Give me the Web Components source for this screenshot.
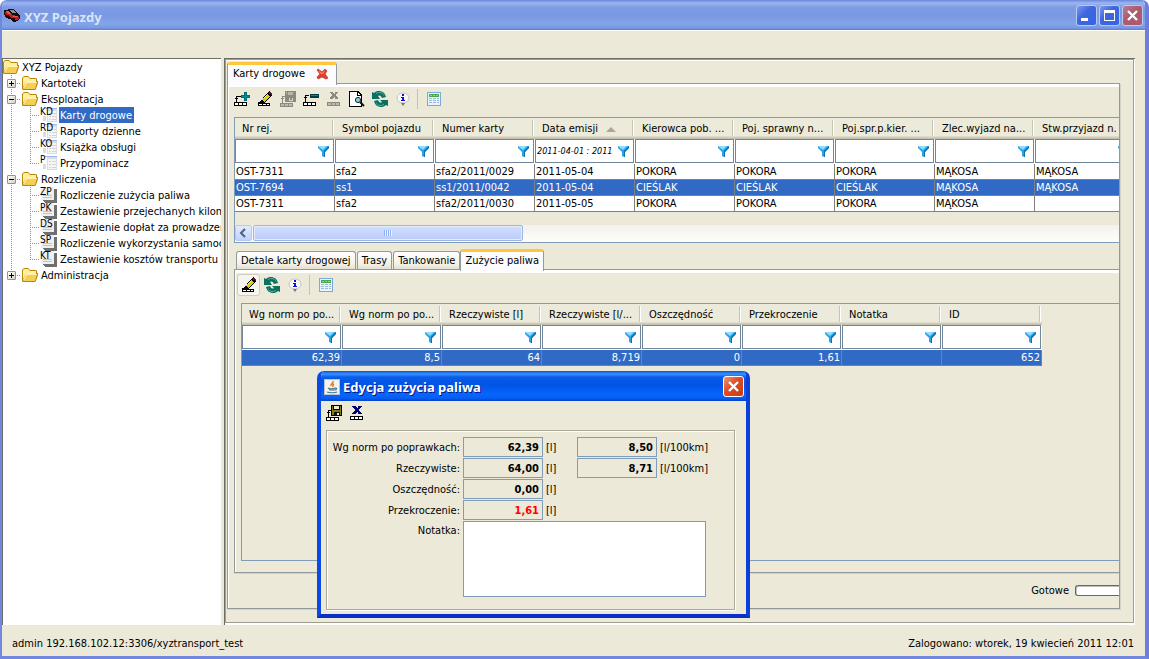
<!DOCTYPE html>
<html lang="pl">
<head>
<meta charset="utf-8">
<title>XYZ Pojazdy</title>
<style>
html, body { height: 100%; margin: 0; }
body {
  --face: #ece9d8; --line: #7f9db9; --pane: #919b9c; --select: #316ac5; --grid: #808080;
  font: 11px/16px "DejaVu Sans Condensed", "DejaVu Sans", "Noto Sans", sans-serif;
  color: #000; background: #fff; overflow: hidden;
}
</style>
</head>
<body>
<app-window heading="XYZ Pojazdy">
  <nav-tree slot="tree">
    <tree-node label="XYZ Pojazdy" icon="folder" root>
      <tree-node label="Kartoteki" icon="folder" toggle="+"></tree-node>
      <tree-node label="Eksploatacja" icon="folder" toggle="-">
        <tree-node label="Karty drogowe" code="KD" icon="form" selected></tree-node>
        <tree-node label="Raporty dzienne" code="RD" icon="form"></tree-node>
        <tree-node label="Książka obsługi" code="KO" icon="form"></tree-node>
        <tree-node label="Przypominacz" code="P" icon="form"></tree-node>
      </tree-node>
      <tree-node label="Rozliczenia" icon="folder" toggle="-">
        <tree-node label="Rozliczenie zużycia paliwa" code="ZP" icon="report"></tree-node>
        <tree-node label="Zestawienie przejechanych kilome" code="PK" icon="report"></tree-node>
        <tree-node label="Zestawienie dopłat za prowadzen" code="DS" icon="report"></tree-node>
        <tree-node label="Rozliczenie wykorzystania samoch" code="SP" icon="report"></tree-node>
        <tree-node label="Zestawienie kosztów transportu" code="KT" icon="report"></tree-node>
      </tree-node>
      <tree-node label="Administracja" icon="folder" toggle="+"></tree-node>
    </tree-node>
  </nav-tree>

  <tab-pane main>
    <tab-item slot="tabs" active closable>Karty drogowe</tab-item>
    <tool-bar>
      <tool-button icon="add" label="Dodaj"></tool-button>
      <tool-button icon="edit" label="Edytuj"></tool-button>
      <tool-button icon="saveOff" label="Zapisz" disabled></tool-button>
      <tool-button icon="remove" label="Usuń"></tool-button>
      <tool-button icon="cancelOff" label="Anuluj" disabled></tool-button>
      <tool-button icon="preview" label="Podgląd"></tool-button>
      <tool-button icon="refresh" label="Odśwież"></tool-button>
      <tool-button icon="info" label="Informacje"></tool-button>
      <tool-divider></tool-divider>
      <tool-button icon="sheet" label="Arkusz"></tool-button>
    </tool-bar>
    <data-grid id="cards" scrollbar sort="3"></data-grid>
    <tab-pane>
      <tab-item slot="tabs">Detale karty drogowej</tab-item>
      <tab-item slot="tabs">Trasy</tab-item>
      <tab-item slot="tabs">Tankowanie</tab-item>
      <tab-item slot="tabs" active>Zużycie paliwa</tab-item>
      <tool-bar>
        <tool-button icon="edit" label="Edytuj" raised></tool-button>
        <tool-button icon="refresh" label="Odśwież"></tool-button>
        <tool-button icon="info" label="Informacje"></tool-button>
        <tool-divider></tool-divider>
        <tool-button icon="sheet" label="Arkusz"></tool-button>
      </tool-bar>
      <data-grid id="fuel" numeric fill></data-grid>
    </tab-pane>
    <task-status>Gotowe</task-status>
  </tab-pane>

  <span slot="left">admin 192.168.102.12:3306/xyztransport_test</span>
  <span slot="right">Zalogowano: wtorek, 19 kwiecień 2011 12:01</span>
</app-window>

<edit-dialog heading="Edycja zużycia paliwa">
  <tool-bar slot="tools">
    <tool-button icon="save" label="Zapisz"></tool-button>
    <tool-button icon="cancel" label="Anuluj"></tool-button>
  </tool-bar>
</edit-dialog>

<script>
const ICONS = {
  car: `<path fill="#111" d="M0 2h2l3-1h4l3 3 3 3 1 1v3l-3 2-3 1-4-3-4-1-2-4z"/><path fill="#c22026" d="M1 4h4l3 3 5 1 2 1v2l-3 1-4-2-3-2-3-1z"/><path fill="#e8575a" d="M1 3h4l2 3H4zM9 8h5v1H9z"/><path fill="#8e8f94" d="M6 2h3l3 3H8z"/><path fill="#300" d="M2 7h3v3H3zM8 10h3v3H9z"/>`,
  folder: `<g shape-rendering="auto"><path fill="#b98608" d="M2 1h4l2 2h6l1 1v2h1v2l-2 6-1 1H1l-1-1V3z"/><path fill="#fff0a0" d="M2 2h4l2 2h6v3H4l-3 5V3z"/><path fill="#f3cf55" d="M4 7h11l-2 7H1z"/><path fill="#fff3b0" d="M4 7h11v1H5l-3 5H1z"/></g>`,
  add: `<path fill="#006b78" d="M10 1h3v3h3v3h-3v3h-3V7H7V4h3z"/><path fill="#0a8a92" d="M11 2h1v3h3v1h-3v3h-1V6H8V5h3z"/><path d="M2 5h5v1H3v5H2zM1 7h3v1H1z"/><path d="M0 11h13v4H0z"/><path fill="#fff" d="M1 12h3v2H1zM5 12h3v2H5zM9 12h3v2H9z"/>`,
  remove: `<path fill="#003c46" d="M7 3h9v4H7z"/><path fill="#078a92" d="M8 4h7v1H8z"/><path d="M2 4h4v1H3v6H2zM1 6h3v1H1z"/><path d="M0 11h13v4H0z"/><path fill="#fff" d="M1 12h3v2H1zM5 12h3v2H5zM9 12h3v2H9z"/>`,
  edit: `<path d="M1 11h2l7-9 2-2 3 2v2l-8 8h6v3H1z"/><path fill="#d8d018" d="M10 3l3 2-6 6-2-2z"/><path fill="#fff" d="M2 13h3v1H2zM6 13h3v1H6zM10 13h2v1h-2z"/><path fill="#fff59a" d="M9 4h1v1H9zM8 5h1v1H8zM7 6h1v1H7z"/><path fill="#6b0f45" d="M12 1h2v1h1v2h-1V3h-2z"/>`,
  save: `<path d="M5 0h11v11H5z"/><path fill="#807b13" d="M6 1h1v4h7V1h1v9H6z"/><path fill="#ece9d8" d="M8 1h5v3H8z"/><path fill="#111" d="M8 7h6v4H8z"/><path fill="#ece9d8" d="M11 8h2v2h-2z"/><path d="M2 5h3v1H3v6H2zM1 7h3v1H1z"/><path d="M0 12h13v4H0z"/><path fill="#fff" d="M1 13h3v2H1zM5 13h3v2H5zM9 13h3v2H9z"/>`,
  saveOff: `<path fill="#8c8a80" d="M5 0h11v11H5z"/><path fill="#b9b6a8" d="M8 1h5v3H8zM6 1h1v2H6z"/><path fill="#d8d5c6" d="M9 7h4v3H9z"/><path fill="#8c8a80" d="M10 7h2v2h-2zM2 5h3v1H3v6H2zM1 7h3v1H1zM0 12h13v4H0z"/><path fill="#bdbaac" d="M1 13h3v2H1zM5 13h3v2H5zM9 13h3v2H9z"/>`,
  cancel: `<path fill="#00007b" d="M3 1h4v1l1 1 1-1V1h4v1h-1v1h-1v1h-1v2h1v1h1v1h1v1H9V8L8 7 7 8v1H3V8h1V7h1V6h1V4H5V3H4V2H3z"/><path d="M1 11h13v4H1z"/><path fill="#fff" d="M2 12h3v2H2zM6 12h3v2H6zM10 12h3v2h-3z"/>`,
  cancelOff: `<path fill="#8c8a80" d="M4 1h3v1l1 1 1-1V1h3v1h-1v1h-1v2h1v1h1v2H9V7L8 6 7 7v1H4V6h1V5h1V3H5V2H4z"/><path fill="#8c8a80" d="M1 11h13v4H1z"/><path fill="#bdbaac" d="M2 12h3v2H2zM6 12h3v2H6zM10 12h3v2h-3z"/>`,
  preview: `<path d="M0 0h9l4 4v12H0z"/><path fill="#fff" d="M1 1h7v4h4v10H1z"/><path fill="#fff" d="M9 2l2 2H9z"/><g shape-rendering="auto"><circle cx="9" cy="9" r="2.6" fill="#7fd4e0" stroke="#223"/><path stroke="#111" stroke-width="2" d="M11 11l4 4"/></g>`,
  refresh: `<g shape-rendering="auto"><path fill="#0b6f62" d="M0 1l2 1c4-4 11-2 12 4l-4 1C9 4 7 4 6 5l2 3H0z"/><path fill="#0b6f62" d="M16 15l-2-1c-4 4-11 2-12-4l4-1c1 3 3 3 4 2L8 9h8z"/><path fill="none" stroke="#55ad9c" d="M4 2.500c4-2 7-1 8 2M12 13.500c-4 2-7 1-8-2"/></g>`,
  info: `<g shape-rendering="auto"><ellipse cx="8" cy="7" rx="6" ry="5" fill="#f8f8fa" stroke="#c4c4c4"/><path fill="#777" d="M6 12h4l-2 3z"/></g><path fill="#1010d0" d="M7 3h2v2H7zM6 6h3v3h1v1H6V9h1V7H6z"/>`,
  sheet: `<path fill="#7fa9dc" d="M1 1h14v14H1z"/><path fill="#e6f3ff" d="M2 2h12v12H2z"/><path fill="#49a64b" d="M3 3h10v3H3z"/><path fill="#93d18c" d="M4 4h2v1H4zM7 4h2v1H7zM10 4h2v1h-2z"/><path fill="#9bbbd8" d="M3 7h3v1H3zM7 7h3v1H7zM11 7h2v1h-2zM3 9h3v1H3zM7 9h3v1H7zM11 9h2v1h-2zM3 11h3v1H3zM7 11h3v1H7zM11 11h2v1h-2z"/>`,
  funnel: `<g shape-rendering="auto"><path fill="#2aa3e6" d="M2 3h11v2L9 9v5H8l-2-1V9L2 5z"/><path fill="#0f6fae" d="M13 3v2L9 9v5H8V8z"/><path fill="#8fdcff" d="M2 3h9L7 7 3 4z"/></g>`,
  close: `<g shape-rendering="auto"><path fill="#e2402b" stroke="#b33322" stroke-width=".7" d="M4 3l4 3 3-3 2 2-2 3 3 4-2 1-4-2-4 2-1-2 3-3-3-4z"/><path fill="#ff8b74" d="M4 4l4 3 3-3-2 4H7z"/></g>`,
  java: `<path fill="#bfc3c8" d="M0 0h16v16H0z"/><path fill="#f3f3f1" d="M1 1h14v14H1z"/><g shape-rendering="auto" fill="none"><path stroke="#e76f00" stroke-width="1.4" d="M9 2c1 2-3 3-2 5M10 5c-2 1-1 2-1 3"/><path stroke="#4b7790" stroke-width="1.2" d="M4 9c1 1 6 1 7 0M5 11h6M3 13c2 1 8 1 10 0M11 9c3 0 1 2 0 2"/></g>`
};
const svg = name => `<svg viewBox="0 0 16 16" shape-rendering="crispEdges" aria-hidden="true">${ICONS[name] || ""}</svg>`;

class Base extends HTMLElement {
  connectedCallback() {
    if (this.shadowRoot) return;
    const t = document.createElement("template");
    t.innerHTML = `<style>*{box-sizing:border-box} button{font:inherit;padding:0;border:0;background:none} svg{display:block;width:16px;height:16px;flex:none} ${this.css()}</style>${this.html()}`;
    this.attachShadow({ mode: "open" }).append(t.content.cloneNode(true));
  }
  at(name) { return this.getAttribute(name) || ""; }
}

customElements.define("caption-button", class extends Base {
  css() { return `:host{display:block}
    button{display:block;width:21px;height:21px;border:1px solid #fff;border-radius:3px;background:linear-gradient(135deg,#7d9bf0,#3f66dd 40%,#3465e6)}
    :host([faded]) button{border-color:#b9caf2}
    .close{background:linear-gradient(135deg,#f09377,#dd4b27 45%,#c93a14)}
    :host([faded]) .close{background:linear-gradient(135deg,#b57f95,#ad5a6c 45%,#a85c74)}
    button svg{width:19px;height:19px}`; }
  html() {
    const k = this.at("kind");
    const art = { min: '<path fill="#fff" d="M4 12h7v3H4z"/>', max: '<path fill="#fff" d="M4 4h11v11H4zM5 7v7h9V7z" fill-rule="evenodd"/>', close: '<path stroke="#fff" stroke-width="2.4" d="M5 5l9 9M14 5l-9 9"/>' }[k];
    return `<button class="${k}" type="button" aria-label="${this.at("label")}"><svg viewBox="0 0 19 19" aria-hidden="true">${art}</svg></button>`;
  }
});

customElements.define("app-window", class extends Base {
  css() { return `:host{display:flex;flex-direction:column;height:100vh;box-sizing:border-box;background:var(--face);border:solid #7187e0;border-width:0 4px 3px 2px;border-right-color:#6a7ee0;border-radius:7px 7px 0 0;overflow:hidden;min-width:0}
    header{flex:none;display:flex;align-items:center;gap:2px;height:30px;margin:0 -4px 0 -2px;padding:2px 6px 0 4px;background:linear-gradient(#6b85dc,#9db6ee 3px,#7f9be4 7px,#7b98e2 16px,#81a5ea 24px,#7b98e0 28px,#6a86d8);border-bottom:1px solid #6e7fc9}
    h1{flex:1;margin:0 0 0 2px;padding-top:2px;font:bold 13px/16px "Noto Sans","Open Sans",sans-serif;color:#d8e4f8}
    .menu{flex:none;height:28px;border-top:1px solid #fff}
    main{flex:1;display:flex;gap:3px;min-height:0;padding-right:10px}
    .tree{flex:0 0 219px;min-width:0;background:#fff;border:solid #716f64;border-width:1px 0 0 1px;overflow:hidden}
    .work{flex:1;min-width:0;display:flex;border:solid #716f64;border-width:1px 0 0 1px;box-shadow:inset -1px -2px #fff}
    .frame{flex:1;min-width:0;display:flex;border:1px solid #9d9d92;box-shadow:inset 0 1px #fff;margin:0 1px 2px 0;padding:0 13px 13px 1px}
    footer{flex:none;display:flex;justify-content:space-between;height:31px;padding:11px 11px 0 10px}`; }
  html() { return `<header>${svg("car")}<h1>${this.at("heading")}</h1>
    <caption-button faded kind="min" label="Minimalizuj"></caption-button><caption-button faded kind="max" label="Maksymalizuj"></caption-button><caption-button faded kind="close" label="Zamknij"></caption-button></header>
    <div class="menu"></div>
    <main><div class="tree"><slot name="tree"></slot></div><div class="work"><div class="frame"><slot></slot></div></div></main>
    <footer><slot name="left"></slot><slot name="right"></slot></footer>`; }
});

customElements.define("nav-tree", class extends Base {
  css() { return `:host{display:block}`; }
  html() { return `<nav aria-label="Nawigacja"><slot></slot></nav>`; }
});

customElements.define("tree-node", class extends Base {
  css() { return `:host{display:block;padding-left:11px;white-space:nowrap;
      background:repeating-linear-gradient(#8c8c8c 0 1px,#0000 1px 2px) 0 0/1px 100% no-repeat,repeating-linear-gradient(90deg,#8c8c8c 0 1px,#0000 1px 2px) 0 8px/9px 1px no-repeat}
    :host(:last-child){background-size:1px 8px,9px 1px}
    :host([root]){padding-left:0;background:none}
    .row{display:flex;align-items:center;height:16px}
    .toggle{flex:none;width:9px;height:9px;margin:0 6px 0 -15px;border:1px solid #7898b5;border-radius:1px;background:linear-gradient(135deg,#fff,#d6d0c4);display:flex}
    .toggle svg{width:7px;height:7px}
    a{color:inherit;text-decoration:none;margin-left:2px;padding:0 1px;height:16px;line-height:18px}
    :host([selected]) a{color:#fff;background:var(--select);padding-right:2px}
    .kids{margin-left:8px}
    .doc{flex:none;width:16px;height:16px;overflow:visible}
    .doc text{font:10px "DejaVu Sans Condensed",sans-serif}`; }
  html() {
    const k = this.at("icon"), t = this.at("toggle");
    const toggle = t ? `<button class="toggle" type="button" aria-label="${t === "+" ? "Rozwiń" : "Zwiń"}"><svg viewBox="0 0 7 7" shape-rendering="crispEdges"><path d="M1 3h5v1H1z${t === "+" ? "M3 1h1v5H3z" : ""}"/></svg></button>` : "";
    const sheet = k === "form"
      ? `<path fill="#dcdcdc" d="M2 9h3v5H2zM6 2h10v13H6z"/><path fill="#f5f5f5" d="M7 4h8v10H7z"/><path fill="#9db8f2" d="M4 1h12v1H4z"/><path fill="#d4d4d4" d="M8 6h2v1H8zM11 6h4v1h-4zM8 9h2v1H8zM11 9h4v1h-4zM8 12h2v1H8zM11 12h4v1h-4z"/>`
      : `<path fill="#6f6f6f" d="M3 2h13v14H5l-4-3z"/><path fill="#efefef" d="M0 0h13v13H0z"/><path fill="#c4c4c4" d="M2 8h9v1H2zM2 10h9v1H2z"/>`;
    const icon = k === "folder" ? svg(k) : `<svg class="doc" viewBox="0 0 16 16" shape-rendering="crispEdges">${sheet}<text x="-1" y="8">${this.at("code")}</text></svg>`;
    return `<div class="row">${toggle}${icon}<a href="#">${this.at("label")}</a></div><div class="kids"><slot></slot></div>`;
  }
});

customElements.define("tab-pane", class extends Base {
  css() { return `:host{flex:1;display:flex;flex-direction:column;min-width:0;min-height:0}
    :host(:not([main])){margin-left:6px}
    .strip{flex:none;display:flex;align-items:flex-end;gap:1px;height:26px;padding-left:2px}
    :host([main]) .strip{height:23px;padding-left:0}
    .pane{flex:1;min-height:0;display:flex;flex-direction:column;border:1px solid var(--pane);border-right:0;box-shadow:inset 0 3px #fff,inset 1px 0 #fff,0 1px #d5d2c2;padding-top:3px;overflow:hidden}
    :host([main]) .pane{border-right:1px solid var(--pane);box-shadow:inset 0 3px #fff,inset 1px 0 #fff,1px 1px #d5d2c2}
    :host(:not([main])) .pane{padding-bottom:11px}`; }
  html() { return `<div class="strip" role="tablist"><slot name="tabs"></slot></div><div class="pane"><slot></slot></div>`; }
});

customElements.define("tab-item", class extends Base {
  css() { return `:host{display:flex;align-items:center;height:18px;padding:0 4px;border:1px solid var(--pane);border-bottom:0;border-radius:3px 3px 0 0;background:linear-gradient(#fff,#f3f1e7 70%,#e4e0d0);box-sizing:border-box}
    :host([active]){position:relative;height:22px;margin:0 0 -2px -1px;padding:0 4px 2px;background:#fcfcfe;border-top:3px solid #ffc73c}
    :host([closable]){height:23px;margin-left:0;padding:0 6px 2px 5px}
    button{white-space:nowrap;color:inherit}
    .x{margin-left:9px}`; }
  html() { return `<button type="button" role="tab" aria-selected="${this.hasAttribute("active")}"><slot></slot></button>${this.hasAttribute("closable") ? `<button class="x" type="button" aria-label="Zamknij kartę">${svg("close")}</button>` : ""}`; }
});

customElements.define("tool-bar", class extends Base {
  css() { return `:host{flex:none;display:flex;align-items:center;height:24px;padding:0 0 6px 2px}`; }
  html() { return `<slot></slot>`; }
});
customElements.define("tool-button", class extends Base {
  css() { return `:host{display:block}
    button{display:flex;align-items:center;justify-content:center;width:23px;height:24px}
    :host([raised]) button{height:22px;border:1px solid #d0cdbd;border-radius:3px;background:#f5f4ee}`; }
  html() { return `<button type="button" aria-label="${this.at("label")}" ${this.hasAttribute("disabled") ? "disabled" : ""}>${svg(this.at("icon"))}</button>`; }
});
customElements.define("tool-divider", class extends Base {
  css() { return `:host{display:block;width:1px;height:20px;margin:0 4px 0 3px;background:#c5c2b2}`; }
  html() { return ``; }
});

const GRIDS = {
  cards: {
    columns: ["Nr rej.", "Symbol pojazdu", "Numer karty", "Data emisji", "Kierowca pob. ...", "Poj. sprawny n...", "Poj.spr.p.kier. ...", "Zlec.wyjazd na...", "Stw.przyjazd n."],
    filters: { 3: "2011-04-01 : 2011" }, selected: 1,
    rows: [
      ["OST-7311", "sfa2", "sfa2/2011/0029", "2011-05-04", "POKORA", "POKORA", "POKORA", "MĄKOSA", "MĄKOSA"],
      ["OST-7694", "ss1", "ss1/2011/0042", "2011-05-04", "CIEŚLAK", "CIEŚLAK", "CIEŚLAK", "MĄKOSA", "MĄKOSA"],
      ["OST-7311", "sfa2", "sfa2/2011/0030", "2011-05-05", "POKORA", "POKORA", "POKORA", "MĄKOSA", ""]]
  },
  fuel: {
    columns: ["Wg norm po po...", "Wg norm po po...", "Rzeczywiste [l]", "Rzeczywiste [l/...", "Oszczędność", "Przekroczenie", "Notatka", "ID"],
    filters: {}, selected: 0,
    rows: [["62,39", "8,5", "64", "8,719", "0", "1,61", "", "652"]]
  }
};

customElements.define("data-grid", class extends Base {
  css() { return `:host{flex:none;display:flex;flex-direction:column;margin-left:6px;border:1px solid var(--line);border-right:0;overflow:hidden}
    :host([fill]){flex:1}
    table{table-layout:fixed;border-collapse:separate;border-spacing:0;width:calc(var(--n)*100px)}
    th,td{padding:0;font-weight:normal;text-align:left;white-space:nowrap;overflow:hidden}
    .head th{height:21px;padding:2px 0 3px;background:linear-gradient(#ebeadb 18px,#dedbcb 18px 19px,#d1cdbd 19px 20px,#c4c0b0 20px)}
    .head div{display:flex;align-items:center;height:16px;padding:2px 0 0 7px;border-right:1px solid #fff;box-shadow:inset -1px 0 #c7c5b2;margin-right:1px}
    .head i{width:0;height:0;margin-left:8px;border:solid transparent;border-width:0 5px 5px;border-bottom-color:#aca899}
    .filter th{height:25px;padding-bottom:1px;vertical-align:top;background:#fff}
    .filter label{display:flex;align-items:center;height:24px;margin-right:1px;padding-right:1px;border:1px solid #71859b;background:#fff}
    input{flex:1;min-width:0;height:18px;padding:0 0 0 1px;border:0;outline:0;background:none;font:italic 9px "DejaVu Sans Condensed",sans-serif}
    .filter button{width:16px;height:16px}
    td{height:16px;line-height:15px;padding:0 1px;background:#fff;border:solid var(--grid);border-width:0 1px 1px 0}
    :host([numeric]) td{text-align:right}
    .sel td{background:var(--select);color:#fff}
    .scroll{display:flex;height:17px;margin-top:13px;background:linear-gradient(#f3f1ec,#fefefb)}
    .scroll button{width:17px;height:16px;border:1px solid #b4c8f6;border-radius:2px;background:linear-gradient(#e1eafe,#c2d2fc)}
    .scroll button svg{width:15px;height:14px}
    .thumb{display:flex;justify-content:center;align-items:center;width:270px;height:16px;margin-left:1px;border:1px solid #9fb5e8;border-radius:2px;background:linear-gradient(#d0dffd,#bccbf7);box-shadow:inset 0 0 0 1px #e4ecff}
    .thumb b{width:8px;height:6px;background:repeating-linear-gradient(90deg,#8cb0f8 0 1px,#eef4fe 1px 2px)}`; }
  html() {
    const g = GRIDS[this.id], sort = this.at("sort");
    const head = g.columns.map((c, i) => `<th scope="col"><div>${c}${sort !== "" && +sort === i ? "<i></i>" : ""}</div></th>`).join("");
    const filter = g.columns.map((c, i) => `<th><label><input aria-label="Filtr: ${c}" value="${g.filters[i] || ""}"><button type="button" aria-label="Filtruj">${svg("funnel")}</button></label></th>`).join("");
    const rows = g.rows.map((r, i) => `<tr class="${i === g.selected ? "sel" : ""}">${r.map(v => `<td>${v}</td>`).join("")}</tr>`).join("");
    const scroll = this.hasAttribute("scrollbar") ? `<div class="scroll"><button type="button" aria-label="Przewiń w lewo"><svg viewBox="0 0 15 14"><path fill="none" stroke="#4d6185" stroke-width="2" d="M9 3L5 7l4 4"/></svg></button><div class="thumb"><b></b></div></div>` : "";
    return `<table style="--n:${g.columns.length}"><thead><tr class="head">${head}</tr><tr class="filter">${filter}</tr></thead><tbody>${rows}</tbody></table>${scroll}`;
  }
});

customElements.define("task-status", class extends Base {
  css() { return `:host{flex:none;display:flex;justify-content:flex-end;align-items:center;gap:6px;height:35px}
    div{width:44px;height:11px;border:1px solid #686868;border-right:0;border-radius:3px 0 0 3px;background:#fff;box-shadow:inset 1px 1px #bebebe}`; }
  html() { return `<slot></slot><div role="progressbar" aria-label="Postęp"></div>`; }
});

customElements.define("edit-dialog", class extends Base {
  css() { return `:host{position:absolute;left:317px;top:371px;width:433px;display:flex;flex-direction:column;background:var(--face);box-sizing:border-box;border:solid #0a4be6;border-width:0 4px 4px;border-color:#0a4be6 #0a3fd8 #0a2fc8 #0a4be6;border-radius:7px 7px 0 0;overflow:hidden}
    header{display:flex;align-items:center;gap:3px;height:30px;margin:0 -4px;padding:1px 6px 0 7px;background:linear-gradient(#0a50d8,#3a93ff 3px,#0a5cea 6px,#0054e3 14px,#0665fb 23px,#0560f5 27px,#0342c8)}
    h2{flex:1;margin:0;font:bold 13px/16px "Noto Sans","Open Sans",sans-serif;color:#fff;text-shadow:1px 1px #0a1883}
    .body{padding:0 11px 4px 5px}
    .tools{display:block;height:29px;margin-left:-6px}
    .tools ::slotted(*){padding-bottom:0}
    .box{display:grid;grid-template-columns:1fr 80px 34px 80px 49px;grid-auto-rows:20px;gap:1px 0;align-items:center;height:180px;padding:6px 28px 0 5px;border:1px solid #aca899;box-shadow:inset 1px 1px #fff,1px 1px #fff;align-content:start}
    label{text-align:right;padding:2px 3px 0 0;white-space:nowrap}
    label.unit{text-align:left;padding:2px 0 0 3px}
    input{display:block;width:100%;height:20px;margin:0;padding:0 3px;border:1px solid var(--line);border-radius:0;background:var(--face);font:bold 11px "DejaVu Sans Condensed",sans-serif;text-align:right;color:#000}
    input.alert{color:#f00}
    .top{align-self:start}
    textarea{grid-column:2/-1;height:76px;align-self:start;resize:none;border:1px solid var(--line);background:#fff;outline:0;margin:0}`; }
  html() {
    const row = (id, l, v, w, alert) => `<label for="${id}">${l}:</label><input id="${id}" readonly value="${v}"${alert ? ' class="alert"' : ""}><label class="unit" for="${id}">[l]</label>` +
      (w ? `<input id="${id}-km" readonly value="${w}"><label class="unit" for="${id}-km">[l/100km]</label>` : `<span></span><span></span>`);
    return `<header>${svg("java")}<h2>${this.at("heading")}</h2><caption-button kind="close" label="Zamknij"></caption-button></header>
    <div class="body"><div class="tools"><slot name="tools"></slot></div>
    <form class="box">${row("norm", "Wg norm po poprawkach", "62,39", "8,50")}${row("real", "Rzeczywiste", "64,00", "8,71")}${row("saved", "Oszczędność", "0,00")}${row("over", "Przekroczenie", "1,61", "", true)}
    <label class="top" for="note">Notatka:</label><textarea id="note"></textarea></form></div>`;
  }
});
</script>
</body>
</html>
